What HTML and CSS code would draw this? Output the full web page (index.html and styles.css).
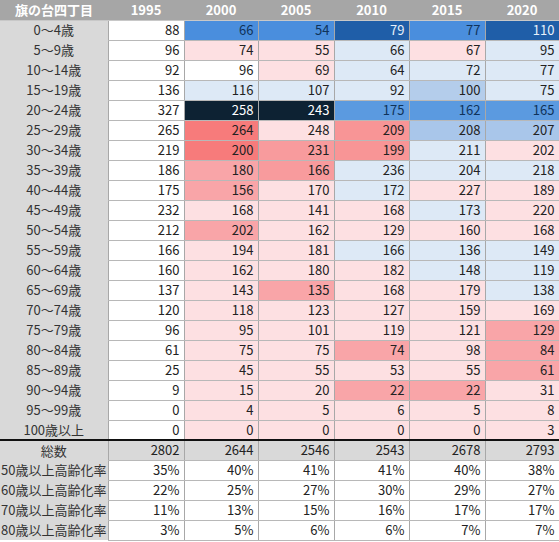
FILE: index.html
```html
<!DOCTYPE html>
<html lang="ja">
<head>
<meta charset="utf-8">
<link rel="stylesheet" href="styles.css">
</head>
<body>
<table class="tbl">
<colgroup>
<col class="w-lab"><col class="w76"><col class="w74"><col class="w76"><col class="w75"><col class="w76"><col class="w74">
</colgroup>
<thead>
<tr><th>旗の台四丁目</th><th>1995</th><th>2000</th><th>2005</th><th>2010</th><th>2015</th><th>2020</th></tr>
</thead>
<tbody>
<tr><th>0～4歳</th><td>88</td><td class="b">66</td><td class="b">54</td><td class="db">79</td><td class="b">77</td><td class="db">110</td></tr>
<tr><th>5～9歳</th><td>96</td><td class="lp">74</td><td class="lp">55</td><td class="lb">66</td><td class="lp">67</td><td class="lb">95</td></tr>
<tr><th>10～14歳</th><td>92</td><td>96</td><td class="lp">69</td><td class="lb">64</td><td class="lb">72</td><td class="lb">77</td></tr>
<tr><th>15～19歳</th><td>136</td><td class="lb">116</td><td class="lb">107</td><td class="lb">92</td><td class="b1">100</td><td class="lb">75</td></tr>
<tr><th>20～24歳</th><td>327</td><td class="nv">258</td><td class="nv">243</td><td class="mb">175</td><td class="mb">162</td><td class="mb">165</td></tr>
<tr><th>25～29歳</th><td>265</td><td class="r">264</td><td class="lp">248</td><td class="pr">209</td><td class="b2">208</td><td class="b2">207</td></tr>
<tr><th>30～34歳</th><td>219</td><td class="r">200</td><td class="r2">231</td><td class="pr">199</td><td class="lb">211</td><td class="lp">202</td></tr>
<tr><th>35～39歳</th><td>186</td><td class="mp">180</td><td class="r2">166</td><td class="lb">236</td><td class="lb">204</td><td class="lb">218</td></tr>
<tr><th>40～44歳</th><td>175</td><td class="mp">156</td><td class="lp">170</td><td class="lb">172</td><td class="lp">227</td><td class="lp">189</td></tr>
<tr><th>45～49歳</th><td>232</td><td class="lp">168</td><td class="lp">141</td><td class="lp">168</td><td class="lb">173</td><td class="lp">220</td></tr>
<tr><th>50～54歳</th><td>212</td><td class="mp">202</td><td class="lp">162</td><td class="lp">129</td><td class="lp">160</td><td class="lp">168</td></tr>
<tr><th>55～59歳</th><td>166</td><td class="lp">194</td><td class="lp">181</td><td class="lb">166</td><td class="lb">136</td><td class="lb">149</td></tr>
<tr><th>60～64歳</th><td>160</td><td class="lp">162</td><td class="lp">180</td><td class="lp">182</td><td class="lb">148</td><td class="lb">119</td></tr>
<tr><th>65～69歳</th><td>137</td><td class="lp">143</td><td class="mp">135</td><td class="lp">168</td><td class="lp">179</td><td class="lb">138</td></tr>
<tr><th>70～74歳</th><td>120</td><td class="lp">118</td><td class="lp">123</td><td class="lp">127</td><td class="lp">159</td><td class="lp">169</td></tr>
<tr><th>75～79歳</th><td>96</td><td class="lp">95</td><td class="lp">101</td><td class="lp">119</td><td class="lp">121</td><td class="mp">129</td></tr>
<tr><th>80～84歳</th><td>61</td><td class="lp">75</td><td class="lp">75</td><td class="mp">74</td><td class="lp">98</td><td class="mp">84</td></tr>
<tr><th>85～89歳</th><td>25</td><td class="lp">45</td><td class="lp">55</td><td class="lp">53</td><td class="lp">55</td><td class="mp">61</td></tr>
<tr><th>90～94歳</th><td>9</td><td class="lp">15</td><td class="lp">20</td><td class="mp">22</td><td class="mp">22</td><td class="lp">31</td></tr>
<tr><th>95～99歳</th><td>0</td><td class="lp">4</td><td class="lp">5</td><td class="lp">6</td><td class="lp">5</td><td class="lp">8</td></tr>
<tr class="last"><th>100歳以上</th><td>0</td><td class="lp">0</td><td class="lp">0</td><td class="lp">0</td><td class="lp">0</td><td class="lp">3</td></tr>
<tr class="total"><th>総数</th><td>2802</td><td>2644</td><td>2546</td><td>2543</td><td>2678</td><td>2793</td></tr>
<tr class="rate"><th>50歳以上高齢化率</th><td>35%</td><td>40%</td><td>41%</td><td>41%</td><td>40%</td><td>38%</td></tr>
<tr class="rate"><th>60歳以上高齢化率</th><td>22%</td><td>25%</td><td>27%</td><td>30%</td><td>29%</td><td>27%</td></tr>
<tr class="rate"><th>70歳以上高齢化率</th><td>11%</td><td>13%</td><td>15%</td><td>16%</td><td>17%</td><td>17%</td></tr>
<tr class="rate"><th>80歳以上高齢化率</th><td>3%</td><td>5%</td><td>6%</td><td>6%</td><td>7%</td><td>7%</td></tr>
</tbody>
</table>
</body>
</html>
```

FILE: styles.css
```css
html, body {
  margin: 0;
  padding: 0;
  background: #ffffff;
}
body {
  font-family: "Noto Sans CJK JP", "Noto Sans", sans-serif;
  font-size: 13px;
  color: #222222;
}
.tbl {
  width: 559px;
  table-layout: fixed;
  border-collapse: collapse;
}
.w-lab { width: 108px; }
.w76 { width: 76px; }
.w75 { width: 75px; }
.w74 { width: 74px; }

.tbl th, .tbl td {
  height: 20px;
  padding: 0 4px;
  line-height: 18px;
  white-space: nowrap;
  overflow: hidden;
  box-sizing: border-box;
}
.tbl thead th {
  background: #a6a6a6;
  color: #ffffff;
  font-weight: bold;
  text-align: center;
  border-bottom: 1px solid #c8c8c8;
}
.tbl tbody th {
  background: #d9d9d9;
  font-weight: normal;
  text-align: center;
  color: #333333;
  padding: 0;
}
.tbl tbody td {
  text-align: right;
  background: #ffffff;
  border: 1px solid #a8a8a8;
  border-top-color: #b8b8b8;
  border-bottom-color: #b8b8b8;
}
.tbl tr.last td, .tbl tr.last th {
  border-bottom: 2px solid #111111;
}
.tbl tr.total td {
  background: #d9d9d9;
}

.lp { background: #fde0e2 !important; }
.mp { background: #f9a5a8 !important; }
.pr { background: #f89596 !important; }
.r2 { background: #f89b9d !important; }
.r  { background: #f77b7b !important; }
.lb { background: #dde9f6 !important; }
.b1 { background: #b4cdeb !important; }
.b2 { background: #a9c6ea !important; }
.mb { background: #5b9ae0 !important; color: #10335a; }
.b  { background: #4a8edd !important; color: #10335a; }
.db { background: #1f5ea8 !important; color: #e8f0fa; }
.nv { background: #0d2233 !important; color: #ffffff; }
```
